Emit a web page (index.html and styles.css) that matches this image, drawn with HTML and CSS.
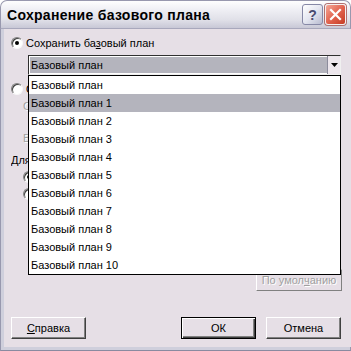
FILE: index.html
```html
<!DOCTYPE html>
<html>
<head>
<meta charset="utf-8">
<link rel="stylesheet" href="styles.css">
</head>
<body>
<div class="window">
  <div class="titlebar">
    <span class="title">Сохранение базового плана</span>
    <div class="tbtns">
      <div class="tbtn help">?</div>
      <div class="tbtn close">
        <svg width="13" height="13" viewBox="0 0 13 13"><path d="M2 2 L11 11 M11 2 L2 11" stroke="#fff" stroke-width="2.2" stroke-linecap="square"/></svg>
      </div>
    </div>
  </div>
  <div class="frame">
    <div class="client">
      <div class="row r1"><span class="radio checked"></span><span>Сохранить ба<u>з</u>овый план</span></div>
      <div class="combo">
        <div class="combo-value">Базовый план</div>
        <div class="combo-btn"><svg width="7" height="4" viewBox="0 0 7 4"><polygon points="0,0 7,0 3.5,4" fill="#000"/></svg></div>
        <div class="list">
          <div class="item">Базовый план</div>
          <div class="item sel">Базовый план 1</div>
          <div class="item">Базовый план 2</div>
          <div class="item">Базовый план 3</div>
          <div class="item">Базовый план 4</div>
          <div class="item">Базовый план 5</div>
          <div class="item">Базовый план 6</div>
          <div class="item">Базовый план 7</div>
          <div class="item">Базовый план 8</div>
          <div class="item">Базовый план 9</div>
          <div class="item">Базовый план 10</div>
        </div>
      </div>
      <div class="row under r2"><span class="radio"></span><span>Сохранить промежуточный план</span></div>
      <div class="row under sub dis r3"><span>Скопировать:</span></div>
      <div class="row under sub dis r4"><span>В:</span></div>
      <div class="row under r5"><span>Для:</span></div>
      <div class="row under sub r6"><span class="radio checked"></span><span>всего проекта</span></div>
      <div class="row under sub r7"><span class="radio"></span><span>выделенных задач</span></div>
      <div class="defrow"><div class="btn disabled def">По умол<u>ч</u>анию</div></div>
      <div class="bottom">
        <div class="btn"><u>С</u>правка</div>
        <div class="spacer"></div>
        <div class="btn default">ОК</div>
        <div class="btn">Отмена</div>
      </div>
    </div>
  </div>
</div>
</body>
</html>
```
FILE: styles.css
```css
html, body { margin: 0; padding: 0; }
body { width: 351px; height: 351px; overflow: hidden; background: #fff; font-family: "Liberation Sans", Arial, sans-serif; font-size: 11px; color: #000; }
.window { width: 351px; height: 351px; display: flex; flex-direction: column; }
.titlebar {
  height: 29px; box-sizing: border-box; border-radius: 7px 7px 0 0;
  background: linear-gradient(#fefefe 0%, #f0f0f5 30%, #e0e0e8 70%, #c8c8d6 100%);
  border: 1px solid #9898ae; border-bottom: 1px solid #a8a8bc;
  display: flex; align-items: center; padding-left: 6px; padding-right: 4px;
}
.title { font-weight: bold; font-size: 14px; flex: 1; letter-spacing: 0.3px; padding-top: 1px; }
.tbtns { display: flex; gap: 2px; }
.tbtn { width: 21px; height: 21px; box-sizing: border-box; border-radius: 3px; display: flex; align-items: center; justify-content: center; }
.help { background: linear-gradient(135deg, #ffffff 0%, #e4e6f0 50%, #b8bbd0 100%); border: 1px solid #8688a6; color: #4a4c70; font-weight: bold; font-size: 14px; }
.close { background: linear-gradient(135deg, #f4a898 0%, #e26450 50%, #c63c24 100%); border: 1px solid #f4f0f0; box-shadow: 0 0 0 1px #b07070; }
.frame { flex: 1; display: flex; border-left: 1px solid #9898ae; border-right: 1px solid #9898ae; border-bottom: 1px solid #8a8aa0; background: #cfcfdc; padding: 0 3px 3px 3px; }
.client { flex: 1; background: #e6dfe6; display: flex; flex-direction: column; padding-left: 7px; padding-right: 10px; box-sizing: border-box; }
.row { display: flex; align-items: center; height: 16px; gap: 3px; white-space: nowrap; }
.under { width: 17px; overflow: hidden; }
.sub { padding-left: 12px; }
.dis { color: #a0a0a0; text-shadow: 1px 1px 0 #fff; }
.r1 { margin-top: 6px; }
.r2 { margin-top: 6px; }
.r3 { margin-top: 1px; }
.r4 { margin-top: 16px; }
.r5 { margin-top: 6px; }
.r6 { margin-top: 1px; }
.r7 { margin-top: 1px; }
.radio { width: 12px; height: 12px; box-sizing: border-box; border-radius: 50%; background: #fff; border: 1px solid; border-color: #808080 #f8f8f8 #f8f8f8 #808080; box-shadow: inset 1px 1px 0 #404040; position: relative; flex: none; }
.radio.checked::after { content: ""; position: absolute; left: 3px; top: 3px; width: 4px; height: 4px; border-radius: 50%; background: #000; }
.combo { position: relative; margin-left: 17px; margin-top: 4px; width: 313px; height: 20px; box-sizing: border-box; border: 1px solid; border-color: #303030 #f0f0f0 #f0f0f0 #303030; background: #fff; display: flex; padding: 1px 0 0 1px; }
.combo-value { flex: 1; height: 16px; background: #b4b4bd; padding-left: 1px; line-height: 16px; }
.combo-btn { width: 13px; height: 18px; margin-top: -1px; box-sizing: border-box; border-left: 1px solid #8c8c9c; background: #ece6ec; display: flex; align-items: center; justify-content: center; }
.list { position: absolute; left: -1px; top: 19px; width: 313px; box-sizing: border-box; border: 1px solid #000; background: #fff; z-index: 5; }
.item { height: 18px; line-height: 18px; padding-left: 2px; }
.item.sel { background: #b4b4bd; }
.defrow { display: flex; justify-content: flex-end; margin-top: 67px; padding-right: 0; }
.btn { width: 75px; height: 22px; box-sizing: border-box; display: flex; align-items: center; justify-content: center; background: #e6dfe6; border: 1px solid; border-color: #ffffff #404040 #404040 #ffffff; box-shadow: inset -1px -1px 0 #808080; }
.btn.def { width: 86px; margin-right: -1px; }
.btn.disabled { color: #a0a0a0; text-shadow: 1px 1px 0 #fff; border-color: #ffffff #808080 #808080 #ffffff; box-shadow: none; }
.btn.default { border: 1px solid #000; box-shadow: inset 1px 1px 0 #fff, inset -1px -1px 0 #404040, inset -2px -2px 0 #808080; }
.bottom { display: flex; margin-top: 26px; gap: 10px; }
.spacer { flex: 1; }
u { text-decoration: underline; text-underline-offset: 1px; }
```
